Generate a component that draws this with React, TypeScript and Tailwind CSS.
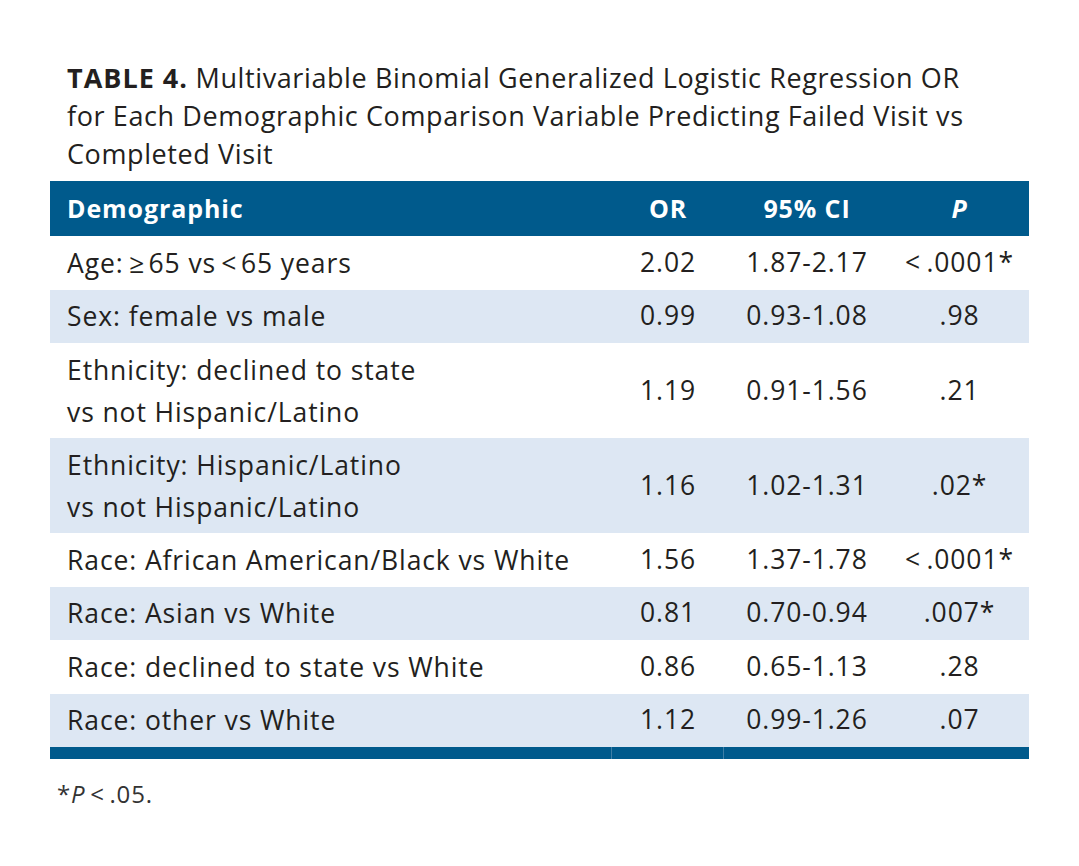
import React from "react";

interface Row {
  label: string[];
  or: string;
  ci: string;
  p: string;
}

const rows: Row[] = [
  { label: ["Age:\u2009\u2265\u200A65 vs\u2009<\u200A65 years"], or: "2.02", ci: "1.87-2.17", p: "<\u2009.0001*" },
  { label: ["Sex: female vs male"], or: "0.99", ci: "0.93-1.08", p: ".98" },
  { label: ["Ethnicity: declined to state", "vs not Hispanic/Latino"], or: "1.19", ci: "0.91-1.56", p: ".21" },
  { label: ["Ethnicity: Hispanic/Latino", "vs not Hispanic/Latino"], or: "1.16", ci: "1.02-1.31", p: ".02*" },
  { label: ["Race: African American/Black vs White"], or: "1.56", ci: "1.37-1.78", p: "<\u2009.0001*" },
  { label: ["Race: Asian vs White"], or: "0.81", ci: "0.70-0.94", p: ".007*" },
  { label: ["Race: declined to state vs White"], or: "0.86", ci: "0.65-1.13", p: ".28" },
  { label: ["Race: other vs White"], or: "1.12", ci: "0.99-1.26", p: ".07" },
];

const cols = "grid grid-cols-[562px_112px_166px_139px]";

const App: React.FC = () => {
  return (
    <div className="w-[1079px] h-[866px] bg-white text-[#231f20] font-['Open_Sans',sans-serif] pt-[59px]">
      {/* Title */}
      <h1 className="pl-[67px] text-[27px] leading-[38px] font-normal tracking-[0.6px] whitespace-nowrap">
        <span className="font-bold tracking-[1px]">TABLE 4.</span> Multivariable Binomial Generalized Logistic Regression OR
        <br />
        for Each Demographic Comparison Variable Predicting Failed Visit vs
        <br />
        Completed Visit
      </h1>

      {/* Table */}
      <div className="ml-[50px] w-[979px] mt-[8px]">
        <div className={`${cols} h-[55px] bg-[#005a8c] text-white font-bold text-[25px] tracking-[0.9px] items-center`}>
          <div className="pl-[17px]">Demographic</div>
          <div className="text-center">OR</div>
          <div className="text-center">95% CI</div>
          <div className="text-center italic">P</div>
        </div>

        {rows.map((r, i) => (
          <div
            key={i}
            className={`${cols} items-center text-[26.5px] tracking-[0.9px] ${r.label.length > 1 ? "h-[95px]" : "h-[53.5px]"} ${
              i % 2 === 1 ? "bg-[#dde7f3]" : "bg-white"
            }`}
          >
            <div className="pl-[17px] leading-[42px] whitespace-nowrap">
              {r.label.map((l, j) => (
                <div key={j}>{l}</div>
              ))}
            </div>
            <div className="text-center">{r.or}</div>
            <div className="text-center">{r.ci}</div>
            <div className="text-center whitespace-nowrap">{r.p}</div>
          </div>
        ))}

        <div className="grid grid-cols-[562px_112px_305px] h-[12px] bg-[#005a8c]">
          <div className="border-r border-[#3f7ea6]" />
          <div className="border-r border-[#3f7ea6]" />
          <div />
        </div>
      </div>

      {/* Footnote */}
      <p className="pl-[57px] mt-[18px] text-[24px] leading-[34px] tracking-[0.8px] text-[#333]">
        *<span className="italic">P</span>{"\u2009<\u2009.05."}
      </p>
    </div>
  );
};

export default App;
